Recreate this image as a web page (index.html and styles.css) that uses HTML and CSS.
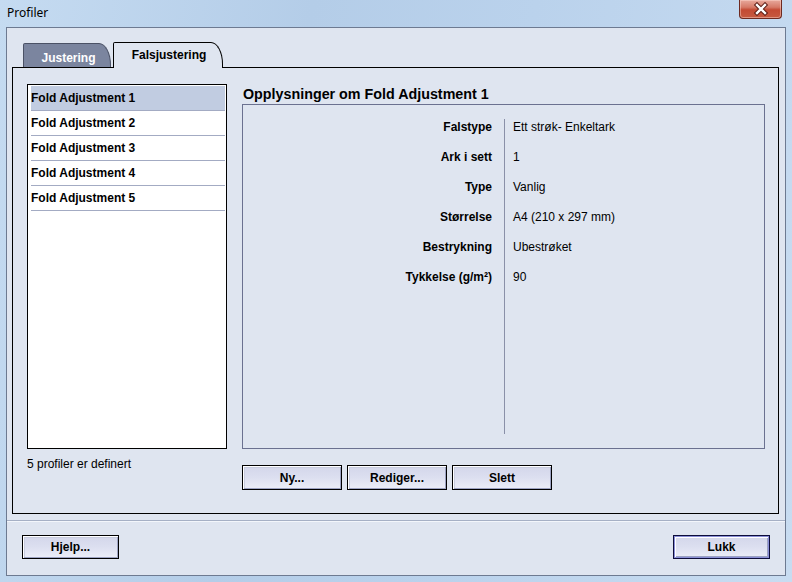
FILE: index.html
```html
<!DOCTYPE html>
<html>
<head>
<meta charset="utf-8">
<link rel="stylesheet" href="styles.css">
</head>
<body>
<div class="window">
  <div class="titlebar">
    <span class="title">Profiler</span>
    <div class="close">
      <svg width="20" height="14" viewBox="0 0 20 14">
        <path d="M6 3 L14 11 M14 3 L6 11" stroke="#5a1a12" stroke-width="4.4" stroke-linecap="square" fill="none"/>
        <path d="M6 3 L14 11 M14 3 L6 11" stroke="#ffffff" stroke-width="2.4" stroke-linecap="square" fill="none"/>
      </svg>
    </div>
  </div>
  <div class="client">
    <div class="tabs">
      <div class="tab inactive">Justering</div>
      <div class="tab active">Falsjustering</div>
    </div>
    <div class="panel">
      <div class="left">
        <ul class="list">
          <li class="item selected">Fold Adjustment 1</li>
          <li class="item">Fold Adjustment 2</li>
          <li class="item">Fold Adjustment 3</li>
          <li class="item">Fold Adjustment 4</li>
          <li class="item">Fold Adjustment 5</li>
        </ul>
        <div class="note">5 profiler er definert</div>
      </div>
      <div class="right">
        <h2 class="heading">Opplysninger om Fold Adjustment 1</h2>
        <div class="details">
          <div class="labels">
            <div class="row">Falstype</div>
            <div class="row">Ark i sett</div>
            <div class="row">Type</div>
            <div class="row">Størrelse</div>
            <div class="row">Bestrykning</div>
            <div class="row">Tykkelse (g/m²)</div>
          </div>
          <div class="values">
            <div class="row">Ett strøk- Enkeltark</div>
            <div class="row">1</div>
            <div class="row">Vanlig</div>
            <div class="row">A4 (210 x 297 mm)</div>
            <div class="row">Ubestrøket</div>
            <div class="row">90</div>
          </div>
        </div>
        <div class="actions">
          <button class="btn">Ny...</button>
          <button class="btn">Rediger...</button>
          <button class="btn">Slett</button>
        </div>
      </div>
    </div>
    <div class="separator"></div>
    <div class="footer">
      <button class="btn footer-btn">Hjelp...</button>
      <button class="btn footer-btn default">Lukk</button>
    </div>
  </div>
</div>
</body>
</html>
```
FILE: styles.css
```css
html, body {
  margin: 0;
  padding: 0;
}
body {
  width: 792px;
  height: 582px;
  overflow: hidden;
  font-family: "Liberation Sans", Arial, sans-serif;
  font-size: 12px;
  color: #000;
  background: linear-gradient(100deg, #c5dbf1 0%, #b4cde8 35%, #bad2ec 60%, #c8dcf1 100%);
}
.window {
  width: 792px;
  height: 582px;
  box-sizing: border-box;
  padding: 0 6px 6px 6px;
  display: flex;
  flex-direction: column;
}
.titlebar {
  height: 27px;
  display: flex;
  align-items: flex-start;
  flex-shrink: 0;
}
.title {
  margin-left: 1px;
  margin-top: 6px;
  font-family: "Noto Sans", "Liberation Sans", sans-serif;
  font-size: 12px;
  line-height: 14px;
  color: #000;
}
.close {
  margin-left: auto;
  margin-right: 4px;
  width: 43px;
  height: 19px;
  box-sizing: border-box;
  border: 1px solid #6e2a20;
  border-top: none;
  border-radius: 0 0 4px 4px;
  background: linear-gradient(#e8a99c 0%, #d67a68 40%, #c34a33 55%, #c65a40 100%);
  box-shadow: inset 0 0 0 1px rgba(255, 220, 210, 0.45);
  display: flex;
  align-items: center;
  justify-content: center;
}
.client {
  flex: 1;
  border: 1px solid #6d7a91;
  background: #dfe5f0;
  display: flex;
  flex-direction: column;
}
.tabs {
  margin-top: 15px;
  padding-left: 16px;
  height: 24px;
  display: flex;
  align-items: flex-end;
  gap: 2px;
  position: relative;
  z-index: 2;
}
.tab {
  box-sizing: border-box;
  font-weight: bold;
  font-size: 12px;
  border: 1px solid #000;
  border-bottom: none;
  border-top-left-radius: 2px;
  border-top-right-radius: 12px 22px;
  display: flex;
  justify-content: center;
}
.tab.inactive {
  width: 88px;
  height: 24px;
  background: #7b859f;
  border-color: #4b5266;
  color: #fff;
  padding-top: 7px;
  padding-left: 3px;
}
.tab.active {
  width: 110px;
  height: 26px;
  margin-bottom: -1px;
  background: #dfe5f0;
  color: #000;
  padding-top: 5px;
  padding-left: 2px;
}
.panel {
  margin: 0 6px 0 5px;
  height: 447px;
  box-sizing: border-box;
  border: 1px solid #000;
  padding: 16px 13px 0 14px;
  display: grid;
  grid-template-columns: 200px 523px;
  column-gap: 15px;
  align-items: start;
  position: relative;
  z-index: 1;
}
.list {
  list-style: none;
  margin: 0;
  height: 365px;
  box-sizing: border-box;
  border: 1px solid #000;
  background: #fff;
  padding: 1px 1px 0 3px;
}
.item {
  height: 25px;
  box-sizing: border-box;
  border-bottom: 1px solid #a3abc3;
  font-weight: bold;
  line-height: 24px;
  white-space: nowrap;
}
.item.selected {
  background: #c1cce1;
}
.note {
  margin-top: 8px;
  line-height: 14px;
}
.heading {
  margin: 0;
  height: 20px;
  line-height: 20px;
  font-size: 14.3px;
  font-weight: bold;
  padding-left: 1px;
}
.details {
  height: 345px;
  box-sizing: border-box;
  border: 1px solid #6b7190;
  padding: 14px 0;
  display: flex;
}
.labels {
  width: 249px;
  padding-right: 12px;
  text-align: right;
  font-weight: bold;
}
.values {
  flex: 1;
  border-left: 1px solid #8a90a8;
  padding-left: 8px;
}
.row {
  height: 30px;
  line-height: 16px;
  white-space: nowrap;
}
.actions {
  margin-top: 16px;
  display: flex;
  gap: 5px;
}
.btn {
  width: 100px;
  height: 25px;
  box-sizing: border-box;
  border: 1px solid #000;
  border-radius: 0;
  padding: 0;
  margin: 0;
  font-family: "Liberation Sans", Arial, sans-serif;
  font-size: 12px;
  font-weight: bold;
  color: #000;
  background: linear-gradient(#d3d6ea 0%, #dcdff0 50%, #eceef8 100%);
  box-shadow: inset 1px 1px 0 #ffffff, inset -1px -1px 0 #9ca2c2, inset 2px 2px 0 #c8ccdf;
}
.separator {
  margin-top: 6px;
  height: 1px;
  background: #a6b0c5;
  border-bottom: 1px solid #f3f6fb;
}
.footer {
  padding: 13px 15px 0 15px;
  display: flex;
  justify-content: space-between;
}
.footer-btn {
  width: 97px;
  height: 24px;
}
.footer-btn.default {
  border-color: #0d0d3a;
  box-shadow: inset 0 0 0 1px #8a8ed6, inset 2px 2px 0 #ffffff, inset -2px -2px 0 #9ca2c2;
}
```
